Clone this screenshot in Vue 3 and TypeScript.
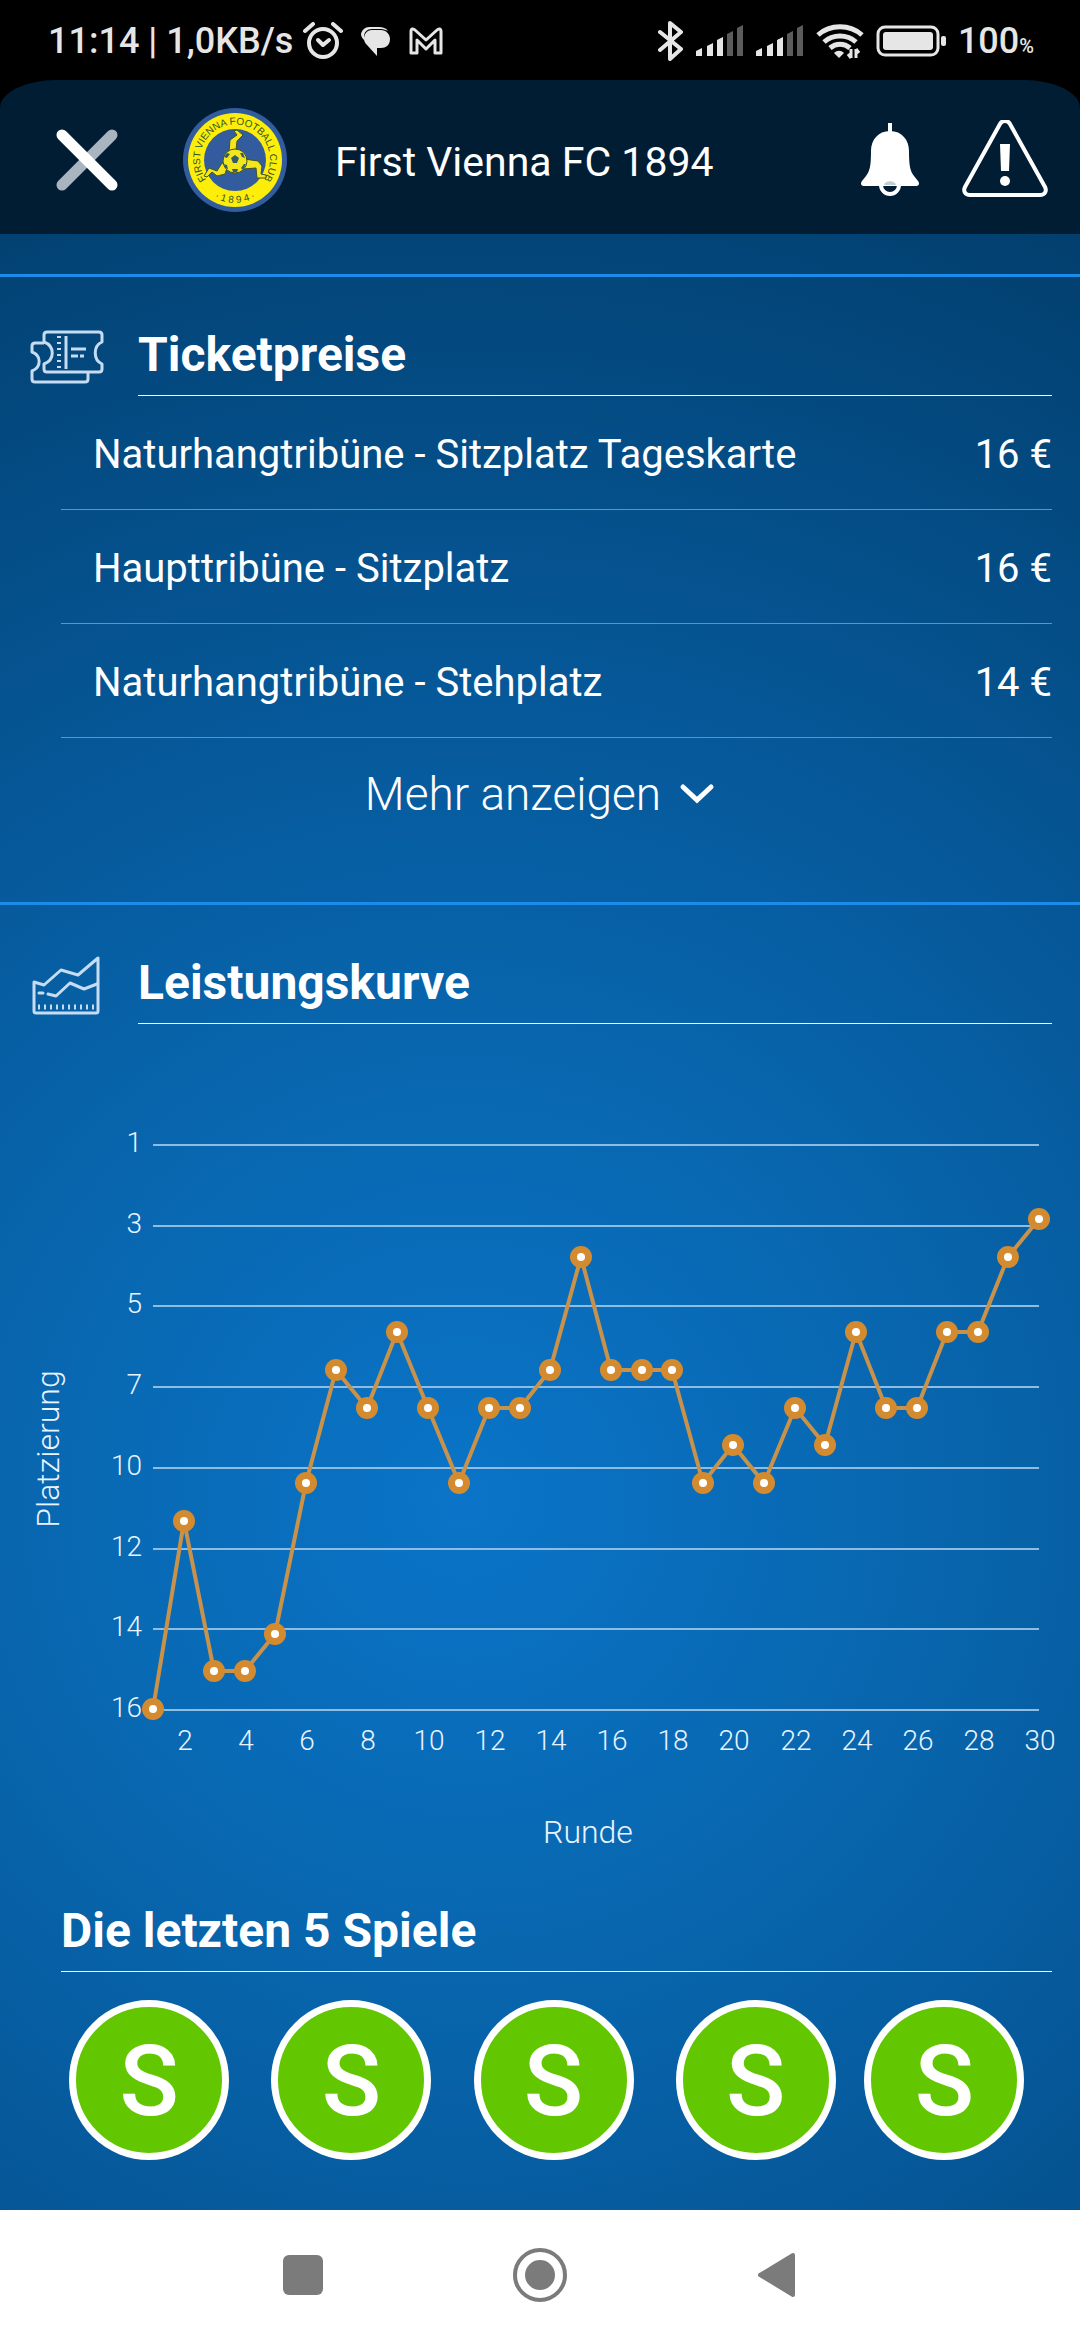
<script setup lang="ts">
interface Price {
  label: string
  amount: string
}

const prices: Price[] = [
  { label: 'Naturhangtribüne - Sitzplatz Tageskarte', amount: '16 €' },
  { label: 'Haupttribüne - Sitzplatz', amount: '16 €' },
  { label: 'Naturhangtribüne - Stehplatz', amount: '14 €' },
]

const lastGames: string[] = ['S', 'S', 'S', 'S', 'S']

// League position after each round, starting with round 1.
const ranks: number[] = [
  16, 11, 15, 15, 14, 10, 7, 8, 6, 8, 10, 8, 8, 7, 4,
  7, 7, 7, 10, 9, 10, 8, 9, 6, 8, 8, 6, 6, 4, 3,
]
const rankTicks: number[] = [1, 3, 5, 7, 10, 12, 14, 16]
const roundTicks: number[] = Array.from({ length: 15 }, (_, i) => (i + 1) * 2)

const plot = { left: 153, right: 1039, top: 120, bottom: 685 }

const roundX = (round: number): number =>
  Math.round(plot.left + ((round - 1) * (plot.right - plot.left)) / 29)
const rankY = (rank: number): number =>
  Math.round(plot.top + ((rank - 1) * (plot.bottom - plot.top)) / 15)
const tickY = (index: number): number =>
  Math.round(plot.top + (index * (plot.bottom - plot.top)) / (rankTicks.length - 1))

const points = ranks.map((rank, i) => ({ x: roundX(i + 1), y: rankY(rank) }))
const linePoints = points.map((p) => `${p.x},${p.y}`).join(' ')

const signals: number[] = [1, 2]
const bars = [
  { x: 0, y: 23, on: true },
  { x: 11, y: 18, on: true },
  { x: 21, y: 12, on: true },
  { x: 31, y: 6, on: false },
  { x: 41, y: 0, on: false },
]
</script>

<template>
  <div class="screen">
    <div class="status">
      <div class="status-left">
        <span class="clock">11:14 | 1,0KB/s</span>
        <svg class="alarm" width="40" height="38" viewBox="0 0 40 38" fill="none" stroke="#e6e6e6">
          <circle cx="20" cy="21" r="14" stroke-width="4" />
          <path d="M2 9 10 2M38 9 30 2" stroke-width="4" stroke-linecap="round" />
          <path d="M15 18l5 5 6-5" stroke-width="4" stroke-linecap="round" stroke-linejoin="round" />
        </svg>
        <svg class="chat" width="30" height="30" viewBox="0 0 30 30" fill="#e6e6e6">
          <path d="M8 1h10c4 0 7 1 9 4-2-1-4-2-7-2H11C6 3 3 6 3 11v3C1 12 0 10 0 8c1-4 4-7 8-7z" />
          <path d="M11 4h9c5 0 9 4 9 9 0 6-4 9-9 9h-4v8l-10-11c-2-2-3-4-3-6 0-5 3-9 8-9z" />
        </svg>
        <svg class="mail" width="34" height="28" viewBox="0 0 34 28" fill="none" stroke="#e6e6e6" stroke-width="3" stroke-linejoin="round">
          <path d="M2 26V4c0-2 2-3 4-1l11 10L28 3c2-2 4-1 4 1v22h-6V13l-9 9-9-9v13z" />
        </svg>
      </div>
      <div class="status-right">
        <svg width="26" height="40" viewBox="0 0 26 40" fill="none" stroke="#e6e6e6" stroke-width="4" stroke-linecap="round" stroke-linejoin="round">
          <path d="M2 11 23 28 12 38V2l11 9L2 29" />
        </svg>
        <svg v-for="s in signals" :key="s" class="signal" width="48" height="32" viewBox="0 0 48 32">
          <path
            v-for="b in bars"
            :key="b.x"
            :d="`M${b.x} ${b.y + 3}l6-3V31h-6z`"
            :fill="b.on ? '#e6e6e6' : '#5c5c5c'"
          />
        </svg>
        <svg class="wifi" width="48" height="36" viewBox="0 0 48 36" fill="none" stroke="#e6e6e6" stroke-width="5">
          <path d="M2 12C14 1 34 1 46 12M8 19c9-8 23-8 32 0M14 25c6-5 14-5 20 0" />
          <path d="M18 30c3-3 7-3 10 0l-5 5z" fill="#e6e6e6" stroke="none" />
          <path d="M35 26v9M32 31l3 4M40 35v-9M43 30l-3-4" stroke-width="3" />
        </svg>
        <svg width="70" height="32" viewBox="0 0 70 32" fill="none">
          <rect x="2" y="2" width="60" height="28" rx="7" stroke="#e6e6e6" stroke-width="3" />
          <rect x="7" y="7" width="50" height="18" rx="3" fill="#e6e6e6" />
          <rect x="65" y="11" width="5" height="10" rx="2" fill="#e6e6e6" />
        </svg>
        <span class="charge">100<small>%</small></span>
      </div>
    </div>

    <header class="header">
      <button class="icon-button" type="button" aria-label="Schließen">
        <svg width="62" height="62" viewBox="0 0 62 62" fill="none" stroke-width="11" stroke-linecap="round">
          <path d="M56 6 6 56" stroke="#a9b4be" />
          <path d="M6 6l50 50" stroke="#fff" />
        </svg>
      </button>
      <svg class="crest" width="104" height="104" viewBox="0 0 104 104" role="img" aria-label="Vereinswappen">
        <defs>
          <path id="crest-top" d="M28 77A35 35 0 1 1 76 77" />
          <path id="crest-bottom" d="M14 72A43 43 0 0 0 90 72" />
        </defs>
        <circle cx="52" cy="52" r="52" fill="#335c9f" />
        <circle cx="52" cy="52" r="47" fill="#fcee0a" />
        <circle cx="52" cy="52" r="31" fill="#335c9f" />
        <text class="crest-text" text-anchor="middle">
          <textPath href="#crest-top" startOffset="50%">FIRST VIENNA FOOTBALL CLUB</textPath>
        </text>
        <text class="crest-text" text-anchor="middle">
          <textPath href="#crest-bottom" startOffset="50%">· 1 8 9 4 ·</textPath>
        </text>
        <g fill="#f4e61c" stroke="#40551f" stroke-width="1" stroke-linejoin="round">
          <path d="M46 44l1-12 7-5-3-4 3-1 6 5-6 6-1 9z" />
          <path d="M61 51l14 2 4 5-1 8 5 1v3h-9l-1-10-13 1z" />
          <path d="M45 57l-3 9-8 2-5-4-5 5-3-1 5-8 8 3 5-8z" />
          <circle cx="52" cy="53" r="12" />
        </g>
        <g fill="#335c6f">
          <path d="M48 50l4-3 4 3-2 5h-4zM41 49l3-4 3 1-3 4zM57 45l3 0 2 5-3-1zM61 56l2 0-3 6-2-2zM49 61h6l-1 3h-4zM41 56l3 1 1 4-3-1z" />
        </g>
      </svg>
      <h1 class="title">First Vienna FC 1894</h1>
      <button class="icon-button bell" type="button" aria-label="Benachrichtigungen">
        <svg width="60" height="76" viewBox="0 0 60 76">
          <path d="M30 1v10" stroke="#fff" stroke-width="4" />
          <circle cx="30" cy="63" r="9" fill="none" stroke="#fff" stroke-width="4" />
          <path d="M30 9c12 0 19 9 19 20 0 14 1 20 5 25l4 5c2 3 1 5-3 5H5c-4 0-5-2-3-5l4-5c4-5 5-11 5-25C11 18 18 9 30 9z" fill="#fff" />
          <path d="M24 63c1-5 11-5 12 0z" fill="#c4ccd3" />
        </svg>
      </button>
      <button class="icon-button" type="button" aria-label="Warnung">
        <svg width="86" height="80" viewBox="0 0 86 80">
          <path d="M38 4c2-4 8-4 10 0l35 63c2 4 0 8-5 8H8c-5 0-7-4-5-8z" fill="none" stroke="#fff" stroke-width="4" />
          <path d="M38 24h10l-1 27h-8z" fill="#fff" />
          <circle cx="43" cy="61" r="5" fill="#fff" />
        </svg>
      </button>
    </header>

    <main class="content">
      <section class="section tickets">
        <div class="section-head">
          <svg class="section-icon" width="74" height="54" viewBox="0 0 74 54" fill="none" stroke="#c5dcf2" stroke-width="3" stroke-linejoin="round">
            <path d="M17 2h52q3 0 3 3v7c-9 4-9 18 0 22v5q0 3-3 3H17q-3 0-3-3v-5c11-4 11-18 0-22V5q0-3 3-3z" />
            <path d="M14 13H5q-3 0-3 3v6c9 3 10 15 0 19v8q0 3 3 3h50q3 0 3-3v-7" />
            <path d="M36 6v33" />
            <path d="M29 6v33" stroke-width="4" stroke-dasharray="2 4" />
            <path d="M41 19h15M41 26h7m2 0h4" />
          </svg>
          <h2 class="section-title">Ticketpreise</h2>
        </div>
        <table class="prices">
          <tbody>
            <tr v-for="p in prices" :key="p.label">
              <th scope="row">{{ p.label }}</th>
              <td>{{ p.amount }}</td>
            </tr>
          </tbody>
        </table>
        <button class="more" type="button">
          Mehr anzeigen
          <svg width="36" height="22" viewBox="0 0 36 22" fill="none" stroke="#fff" stroke-width="5" stroke-linecap="round">
            <path d="M4 4l14 13L32 4" />
          </svg>
        </button>
      </section>

      <section class="section">
        <div class="section-head">
          <svg class="section-icon" width="74" height="60" viewBox="0 0 74 60" fill="none" stroke="#c5dcf2" stroke-width="3" stroke-linejoin="round" stroke-linecap="round">
            <path d="M4 27l10 3L31 15l17 5L68 3v53q0 2-2 2H6q-2 0-2-2z" />
            <path d="M9 38h4M18 39l8 2 14-13 14 6 13-5" />
            <path d="M8 52h57" stroke-width="5" stroke-dasharray="2 4" stroke-linecap="butt" />
          </svg>
          <h2 class="section-title">Leistungskurve</h2>
        </div>

        <svg class="chart" viewBox="0 0 1080 846" role="img" aria-label="Platzierung je Runde">
          <g v-for="(t, i) in rankTicks" :key="t">
            <rect class="grid" :x="plot.left" :y="tickY(i)" :width="plot.right - plot.left" height="2" />
            <text class="tick" x="142" :y="tickY(i) + 8" text-anchor="end">{{ t }}</text>
          </g>
          <text v-for="r in roundTicks" :key="r" class="tick" :x="roundX(r) + 1" y="726" text-anchor="middle">{{ r }}</text>
          <text class="axis" transform="translate(59 425) rotate(-90)" text-anchor="middle">Platzierung</text>
          <text class="axis" x="588" y="819" text-anchor="middle">Runde</text>
          <polyline class="line" :points="linePoints" />
          <g v-for="p in points" :key="p.x">
            <circle class="dot" :cx="p.x" :cy="p.y" r="11" />
            <circle class="core" :cx="p.x" :cy="p.y" r="4" />
          </g>
        </svg>

        <h2 class="section-title form-title">Die letzten 5 Spiele</h2>
        <ol class="form">
          <li v-for="(g, i) in lastGames" :key="i"><span class="result">{{ g }}</span></li>
        </ol>
      </section>
    </main>

    <nav class="nav">
      <button type="button" aria-label="Übersicht">
        <svg width="40" height="40" viewBox="0 0 40 40"><rect width="40" height="40" rx="6" fill="#7b7b7b" /></svg>
      </button>
      <button type="button" aria-label="Startseite">
        <svg width="54" height="54" viewBox="0 0 54 54">
          <circle cx="27" cy="27" r="25" fill="none" stroke="#7b7b7b" stroke-width="4" />
          <circle cx="27" cy="27" r="15" fill="#7b7b7b" />
        </svg>
      </button>
      <button type="button" aria-label="Zurück">
        <svg width="40" height="46" viewBox="0 0 40 46">
          <path d="M3 23 36 3v40z" fill="#7b7b7b" stroke="#7b7b7b" stroke-width="4" stroke-linejoin="round" />
        </svg>
      </button>
    </nav>
  </div>
</template>

<style>
body {
  background: #000;
}
</style>

<style scoped>
.screen {
  min-height: 100vh;
  display: flex;
  flex-direction: column;
  background: #000;
  color: #fff;
  font-family: Roboto, 'Liberation Sans', sans-serif;
}

svg {
  display: block;
  flex: none;
}

button {
  padding: 0;
  border: 0;
  background: none;
  color: inherit;
  font: inherit;
}

.status {
  display: flex;
  align-items: center;
  justify-content: space-between;
  height: 80px;
  padding: 2px 46px 0 48px;
  box-sizing: border-box;
  color: #e6e6e6;
  font-size: 36px;
  font-weight: 500;
  white-space: nowrap;
}

.status-left,
.status-right {
  display: flex;
  align-items: center;
}

.alarm {
  margin-left: 10px;
}

.chat,
.mail {
  margin-left: 18px;
}

.status-right {
  gap: 12px;
}

.charge small {
  font-size: 20px;
}

.header {
  display: flex;
  align-items: center;
  height: 154px;
  padding: 6px 32px 0 56px;
  box-sizing: border-box;
  border-radius: 56px 56px 0 0 / 28px 28px 0 0;
  background: #011d34;
}

.crest {
  margin-left: 65px;
}

.crest-text {
  fill: #33502c;
  font-family: 'Liberation Sans Narrow', 'Liberation Sans', sans-serif;
  font-size: 10px;
  font-weight: 400;
}

.title {
  flex: 1;
  margin: 0 0 0 48px;
  padding-top: 4px;
  font-size: 41px;
  font-weight: 400;
  line-height: 48px;
}

.bell {
  margin-right: 42px;
}

.content {
  flex: 1;
  padding-top: 40px;
  background: radial-gradient(circle farthest-corner at 43% 64%, #0a74c8 0%, #0866ae 33%, #065a9c 54%, #044d86 76%, #023f6e 100%);
}

.section {
  border-top: 3px solid #1c8ceb;
}

.tickets {
  padding-bottom: 76px;
}

.section-head {
  display: flex;
  align-items: center;
  padding: 40px 28px 0 30px;
}

.section-icon {
  margin-right: 34px;
}

.section-title {
  flex: 1;
  margin: 0;
  height: 78px;
  border-bottom: 1px solid #fff;
  font-size: 48px;
  font-weight: 700;
  line-height: 76px;
}

.prices {
  width: calc(100% - 89px);
  margin-left: 61px;
  border-collapse: separate;
  border-spacing: 0;
  font-size: 40px;
}

.prices th,
.prices td {
  height: 109px;
  padding: 4px 0 0;
  border-bottom: 1px solid #5b94c6;
  font-weight: 400;
}

.prices th {
  padding-left: 32px;
  text-align: left;
}

.prices td {
  text-align: right;
}

.more {
  display: flex;
  align-items: center;
  gap: 18px;
  margin: 24px auto 0;
  font-size: 46px;
  font-weight: 300;
  line-height: 64px;
}

.chart {
  width: 100%;
}

.grid {
  fill: #8fbce2;
}

.tick {
  fill: #e8f4ff;
  font-size: 28px;
  font-weight: 300;
}

.axis {
  fill: #e8f4ff;
  font-size: 32px;
  font-weight: 300;
}

.line {
  fill: none;
  stroke: #c8924b;
  stroke-width: 4px;
}

.dot {
  fill: #d48b30;
}

.core {
  fill: #fff;
}

.form-title {
  margin: 23px 28px 0 61px;
}

.form {
  display: grid;
  grid-template-columns: repeat(4, 202fr) 175fr;
  margin: 0;
  padding: 28px 48px 48px;
  list-style: none;
}

.form li {
  display: flex;
  justify-content: center;
}

.result {
  width: 160px;
  height: 160px;
  box-sizing: border-box;
  border: 7px solid #fff;
  border-radius: 50%;
  background: #62c700;
  font-size: 98px;
  font-weight: 500;
  line-height: 150px;
  text-align: center;
}

.nav {
  display: flex;
  align-items: center;
  justify-content: center;
  gap: 190px;
  height: 130px;
  background: #fff;
}
</style>
